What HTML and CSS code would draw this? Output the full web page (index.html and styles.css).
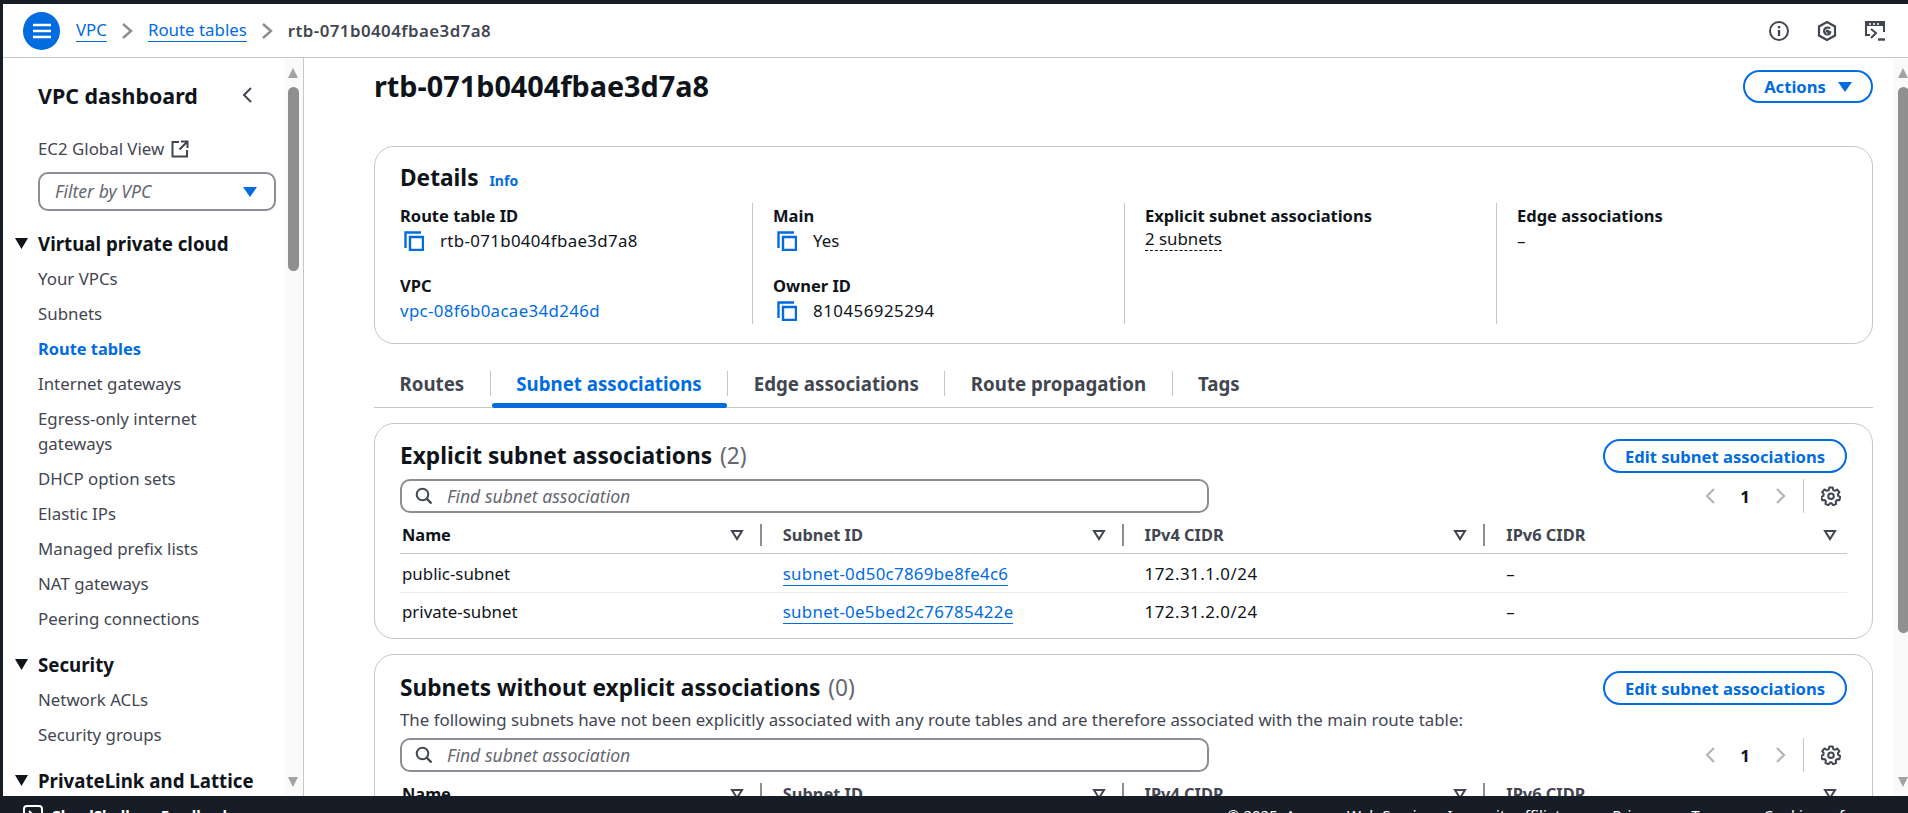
FILE: index.html
```html
<!DOCTYPE html>
<html lang="en">
<head>
    <meta charset="UTF-8">
    <title>rtb-071b0404fbae3d7a8 | VPC Console</title>
    <link rel="stylesheet" href="styles.css">
</head>
<body>
<div class="app">
    <header class="topbar">
        <button class="menu-btn">
            <svg width="20" height="16" viewBox="0 0 20 16"><path d="M1 2h18M1 8h18M1 14h18" stroke="#fff" stroke-width="2.4"/></svg>
        </button>
        <nav class="crumbs">
            <a href="#">VPC</a>
            <svg class="crumb-sep" width="12" height="18" viewBox="0 0 12 18"><path d="M2 2l8 7-8 7" fill="none" stroke="#8c8c94" stroke-width="2.4"/></svg>
            <a href="#">Route tables</a>
            <svg class="crumb-sep" width="12" height="18" viewBox="0 0 12 18"><path d="M2 2l8 7-8 7" fill="none" stroke="#8c8c94" stroke-width="2.4"/></svg>
            <span class="crumb-now">rtb-071b0404fbae3d7a8</span>
        </nav>
        <div class="top-icons">
            <svg width="22" height="22" viewBox="0 0 22 22"><circle cx="11" cy="11" r="9" fill="none" stroke="#424650" stroke-width="2"/><path d="M11 10v6" stroke="#424650" stroke-width="2.4"/><path d="M11 6v2.4" stroke="#424650" stroke-width="2.4"/></svg>
            <svg width="20" height="22" viewBox="0 0 20 22"><path d="M10 2l8 4.500v9L10 20l-8-4.500v-9z" fill="none" stroke="#424650" stroke-width="2.200"/><path d="M13 8.500A3.500 3.500 0 1 0 13 13.500" fill="none" stroke="#424650" stroke-width="2.200"/><path d="M9 10.500l5 2.500" stroke="#424650" stroke-width="3"/></svg>
            <svg width="22" height="22" viewBox="0 0 22 22"><path d="M6 15H2V2h18v10" fill="none" stroke="#424650" stroke-width="2"/><path d="M2 2h18v4H2z" fill="#424650"/><path d="M5 4h2M9 4h2M13 4h2" stroke="#fff" stroke-width="1.600"/><path d="M7 9l5 4-5 5" fill="none" stroke="#424650" stroke-width="2"/><path d="M14 19.500h7" stroke="#424650" stroke-width="2.400"/></svg>
        </div>
    </header>

    <div class="workspace">
        <aside class="sidebar">
            <div class="side-content">
                <div class="side-title">
                    <span>VPC dashboard</span>
                    <svg width="12" height="18" viewBox="0 0 12 18"><path d="M10 2L3 9l7 7" fill="none" stroke="#424650" stroke-width="2"/></svg>
                </div>
                <a class="global-link" href="#">EC2 Global View
                    <svg width="18" height="18" viewBox="0 0 18 18"><path d="M8 2H1.500v14.500H16V10" fill="none" stroke="#424650" stroke-width="2"/><path d="M10 1.500h6.500V8M16 2L8.500 9.500" fill="none" stroke="#424650" stroke-width="2"/></svg>
                </a>
                <div class="filter-box">
                    <span>Filter by VPC</span>
                    <svg width="14" height="10" viewBox="0 0 14 10"><path d="M0 0h14L7 10z" fill="#006ce0"/></svg>
                </div>
                <div class="nav-group">
                    <div class="nav-head"><svg width="13" height="11" viewBox="0 0 13 11"><path d="M0 0h13L6.500 11z" fill="#0f141a"/></svg>Virtual private cloud</div>
                    <a class="nav-item" href="#">Your VPCs</a>
                    <a class="nav-item" href="#">Subnets</a>
                    <a class="nav-item active" href="#">Route tables</a>
                    <a class="nav-item" href="#">Internet gateways</a>
                    <a class="nav-item" href="#">Egress-only internet gateways</a>
                    <a class="nav-item" href="#">DHCP option sets</a>
                    <a class="nav-item" href="#">Elastic IPs</a>
                    <a class="nav-item" href="#">Managed prefix lists</a>
                    <a class="nav-item" href="#">NAT gateways</a>
                    <a class="nav-item" href="#">Peering connections</a>
                </div>
                <div class="nav-group">
                    <div class="nav-head"><svg width="13" height="11" viewBox="0 0 13 11"><path d="M0 0h13L6.500 11z" fill="#0f141a"/></svg>Security</div>
                    <a class="nav-item" href="#">Network ACLs</a>
                    <a class="nav-item" href="#">Security groups</a>
                </div>
                <div class="nav-group">
                    <div class="nav-head"><svg width="13" height="11" viewBox="0 0 13 11"><path d="M0 0h13L6.500 11z" fill="#0f141a"/></svg>PrivateLink and Lattice</div>
                </div>
            </div>
            <div class="scroll scroll-side">
                <i class="scroll-up"></i>
                <i class="scroll-thumb"></i>
                <i class="scroll-down"></i>
            </div>
        </aside>

        <main class="main">
            <div class="main-content">
                <div class="page-head">
                    <h1>rtb-071b0404fbae3d7a8</h1>
                    <button class="btn btn-actions">Actions
                        <svg width="14" height="10" viewBox="0 0 14 10"><path d="M0 0h14L7 10z" fill="#006ce0"/></svg>
                    </button>
                </div>

                <section class="card card-details">
                    <h2>Details <a class="info" href="#">Info</a></h2>
                    <div class="details-grid">
                        <div class="detail-col">
                            <div class="detail">
                                <div class="label">Route table ID</div>
                                <div class="value copyable id-text"><svg class="copy" width="20" height="20" viewBox="0 0 20 20"><path d="M1.500 17V1.500H17" fill="none" stroke="#006ce0" stroke-width="2.400"/><path d="M6 6h13v13H6z" fill="none" stroke="#006ce0" stroke-width="2.400"/></svg>rtb-071b0404fbae3d7a8</div>
                            </div>
                            <div class="detail">
                                <div class="label">VPC</div>
                                <div class="value id-text"><a href="#" class="plain-link">vpc-08f6b0acae34d246d</a></div>
                            </div>
                        </div>
                        <div class="detail-col">
                            <div class="detail">
                                <div class="label">Main</div>
                                <div class="value copyable"><svg class="copy" width="20" height="20" viewBox="0 0 20 20"><path d="M1.500 17V1.500H17" fill="none" stroke="#006ce0" stroke-width="2.400"/><path d="M6 6h13v13H6z" fill="none" stroke="#006ce0" stroke-width="2.400"/></svg>Yes</div>
                            </div>
                            <div class="detail">
                                <div class="label">Owner ID</div>
                                <div class="value copyable num-text"><svg class="copy" width="20" height="20" viewBox="0 0 20 20"><path d="M1.500 17V1.500H17" fill="none" stroke="#006ce0" stroke-width="2.400"/><path d="M6 6h13v13H6z" fill="none" stroke="#006ce0" stroke-width="2.400"/></svg>810456925294</div>
                            </div>
                        </div>
                        <div class="detail-col">
                            <div class="detail">
                                <div class="label">Explicit subnet associations</div>
                                <div class="value"><span class="dashed">2 subnets</span></div>
                            </div>
                        </div>
                        <div class="detail-col">
                            <div class="detail">
                                <div class="label">Edge associations</div>
                                <div class="value">–</div>
                            </div>
                        </div>
                    </div>
                </section>

                <div class="tabs">
                    <a class="tab" href="#"><span>Routes</span></a>
                    <a class="tab active" href="#"><span>Subnet associations</span></a>
                    <a class="tab" href="#"><span>Edge associations</span></a>
                    <a class="tab" href="#"><span>Route propagation</span></a>
                    <a class="tab" href="#"><span>Tags</span></a>
                </div>

                <section class="card card-table">
                    <div class="card-head">
                        <div class="card-heading">
                            <h2>Explicit subnet associations <span class="count">(2)</span></h2>
                        </div>
                        <button class="btn">Edit subnet associations</button>
                    </div>
                    <div class="tools">
                        <div class="search">
                            <svg width="18" height="18" viewBox="0 0 18 18"><circle cx="7.500" cy="7.500" r="5.800" fill="none" stroke="#424650" stroke-width="2"/><path d="M11.500 11.500l5 5" stroke="#424650" stroke-width="2.400"/></svg>
                            <span>Find subnet association</span>
                        </div>
                        <div class="pager">
                            <svg width="12" height="18" viewBox="0 0 12 18"><path d="M10 2L3 9l7 7" fill="none" stroke="#b4b4bb" stroke-width="2.200"/></svg>
                            <b>1</b>
                            <svg width="12" height="18" viewBox="0 0 12 18"><path d="M2 2l7 7-7 7" fill="none" stroke="#b4b4bb" stroke-width="2.200"/></svg>
                            <i class="pager-sep"></i>
                            <svg class="gear" width="20" height="20" viewBox="0 0 20 20"><path d="M8.300 1.500h3.400l.5 2.500 1.700.8 2.200-1.300 2.300 2.700-1.500 2 .3 1.700 2 1-.8 3.300-2.500-.1-1.200 1.400.5 2.400-3 1.400-1.500-2h-1.800l-1.500 2-3-1.400.5-2.400-1.200-1.400-2.500.1-.8-3.300 2-1 .3-1.700-1.500-2 2.300-2.700L6.100 4.800 7.800 4z" fill="none" stroke="#424650" stroke-width="2" stroke-linejoin="round"/><circle cx="10" cy="10.300" r="2.800" fill="none" stroke="#424650" stroke-width="2"/></svg>
                        </div>
                    </div>
                    <div class="tbl-row tbl-head">
                        <div class="th first"><span>Name</span><svg class="caret" width="14" height="12" viewBox="0 0 14 12"><path d="M2 2h10L7 10z" fill="none" stroke="#424650" stroke-width="2"/></svg><i class="th-sep"></i></div>
                        <div class="th"><span>Subnet ID</span><svg class="caret" width="14" height="12" viewBox="0 0 14 12"><path d="M2 2h10L7 10z" fill="none" stroke="#424650" stroke-width="2"/></svg><i class="th-sep"></i></div>
                        <div class="th"><span>IPv4 CIDR</span><svg class="caret" width="14" height="12" viewBox="0 0 14 12"><path d="M2 2h10L7 10z" fill="none" stroke="#424650" stroke-width="2"/></svg><i class="th-sep"></i></div>
                        <div class="th last"><span>IPv6 CIDR</span><svg class="caret" width="14" height="12" viewBox="0 0 14 12"><path d="M2 2h10L7 10z" fill="none" stroke="#424650" stroke-width="2"/></svg></div>
                    </div>
                    <div class="tbl-row tbl-body">
                        <div class="td first">public-subnet</div>
                        <div class="td"><a href="#">subnet-0d50c7869be8fe4c6</a></div>
                        <div class="td num-text">172.31.1.0/24</div>
                        <div class="td">–</div>
                    </div>
                    <div class="tbl-row tbl-body no-line">
                        <div class="td first">private-subnet</div>
                        <div class="td"><a href="#">subnet-0e5bed2c76785422e</a></div>
                        <div class="td num-text">172.31.2.0/24</div>
                        <div class="td">–</div>
                    </div>
                </section>

                <section class="card card-table card-second">
                    <div class="card-head">
                        <div class="card-heading">
                            <h2>Subnets without explicit associations <span class="count">(0)</span></h2>
                            <p class="card-desc">The following subnets have not been explicitly associated with any route tables and are therefore associated with the main route table:</p>
                        </div>
                        <button class="btn">Edit subnet associations</button>
                    </div>
                    <div class="tools">
                        <div class="search">
                            <svg width="18" height="18" viewBox="0 0 18 18"><circle cx="7.500" cy="7.500" r="5.800" fill="none" stroke="#424650" stroke-width="2"/><path d="M11.500 11.500l5 5" stroke="#424650" stroke-width="2.400"/></svg>
                            <span>Find subnet association</span>
                        </div>
                        <div class="pager">
                            <svg width="12" height="18" viewBox="0 0 12 18"><path d="M10 2L3 9l7 7" fill="none" stroke="#b4b4bb" stroke-width="2.200"/></svg>
                            <b>1</b>
                            <svg width="12" height="18" viewBox="0 0 12 18"><path d="M2 2l7 7-7 7" fill="none" stroke="#b4b4bb" stroke-width="2.200"/></svg>
                            <i class="pager-sep"></i>
                            <svg class="gear" width="20" height="20" viewBox="0 0 20 20"><path d="M8.300 1.500h3.400l.5 2.500 1.700.8 2.200-1.300 2.300 2.700-1.500 2 .3 1.700 2 1-.8 3.300-2.500-.1-1.200 1.400.5 2.400-3 1.400-1.500-2h-1.800l-1.500 2-3-1.400.5-2.400-1.200-1.400-2.500.1-.8-3.300 2-1 .3-1.700-1.500-2 2.300-2.700L6.100 4.800 7.800 4z" fill="none" stroke="#424650" stroke-width="2" stroke-linejoin="round"/><circle cx="10" cy="10.300" r="2.800" fill="none" stroke="#424650" stroke-width="2"/></svg>
                        </div>
                    </div>
                    <div class="tbl-row tbl-head">
                        <div class="th first"><span>Name</span><svg class="caret" width="14" height="12" viewBox="0 0 14 12"><path d="M2 2h10L7 10z" fill="none" stroke="#424650" stroke-width="2"/></svg><i class="th-sep"></i></div>
                        <div class="th"><span>Subnet ID</span><svg class="caret" width="14" height="12" viewBox="0 0 14 12"><path d="M2 2h10L7 10z" fill="none" stroke="#424650" stroke-width="2"/></svg><i class="th-sep"></i></div>
                        <div class="th"><span>IPv4 CIDR</span><svg class="caret" width="14" height="12" viewBox="0 0 14 12"><path d="M2 2h10L7 10z" fill="none" stroke="#424650" stroke-width="2"/></svg><i class="th-sep"></i></div>
                        <div class="th last"><span>IPv6 CIDR</span><svg class="caret" width="14" height="12" viewBox="0 0 14 12"><path d="M2 2h10L7 10z" fill="none" stroke="#424650" stroke-width="2"/></svg></div>
                    </div>
                </section>
            </div>
            <div class="scroll scroll-main">
                <i class="scroll-up"></i>
                <i class="scroll-thumb"></i>
                <i class="scroll-down"></i>
            </div>
        </main>
    </div>

    <footer class="footer">
        <div class="foot-left">
            <svg width="20" height="20" viewBox="0 0 20 20"><rect x="1" y="1" width="18" height="18" rx="3" fill="none" stroke="#fff" stroke-width="2"/><path d="M6 6l4 4-4 4" fill="none" stroke="#fff" stroke-width="2"/></svg>
            <span>CloudShell</span>
            <span>Feedback</span>
        </div>
        <div class="foot-right">
            <span class="copyright">© 2025, Amazon Web Services, Inc. or its affiliates.</span>
            <span>Privacy</span>
            <span>Terms</span>
            <span>Cookie preferences</span>
        </div>
    </footer>
</div>
</body>
</html>
```

FILE: styles.css
```css
html, body {
    margin: 0;
    height: 100%;
    overflow: hidden;
    background: #161d26;
    font-family: "Noto Sans", sans-serif;
    font-size: 16.85px;
    line-height: 25px;
    color: #0f141a;
}
a {
    color: #006ce0;
    text-decoration: none;
}
h1, h2, p {
    margin: 0;
}
.app {
    height: 813px;
    padding: 4px 0 0 3px;
    box-sizing: border-box;
    display: flex;
    flex-direction: column;
}
.id-text {
    letter-spacing: .35px;
}
.num-text {
    letter-spacing: .5px;
}

/* top bar */
.topbar {
    height: 53px;
    flex: none;
    background: #fff;
    border-bottom: 1px solid #c6c6cd;
    display: flex;
    align-items: center;
    padding: 0 22px 0 20px;
}
.menu-btn {
    width: 37px;
    height: 38px;
    border: none;
    border-radius: 50%;
    background: #006ce0;
    padding: 0;
    display: flex;
    align-items: center;
    justify-content: center;
}
.crumbs {
    margin-left: 16px;
    display: flex;
    align-items: center;
    flex: 1;
}
.crumbs a {
    border-bottom: 1px solid #006ce0;
    line-height: 22px;
}
.crumb-sep {
    margin: 0 14.500px;
}
.crumb-now {
    font-weight: 600;
    color: #424650;
    letter-spacing: .45px;
}
.top-icons {
    display: flex;
    align-items: center;
    gap: 27px;
}

/* layout under the top bar */
.workspace {
    flex: 1;
    min-height: 0;
    display: flex;
    background: #fff;
}
.sidebar {
    width: 300px;
    flex: none;
    display: flex;
    border-right: 1px solid #c6c6cd;
    overflow: hidden;
}
.side-content {
    flex: 1;
    min-width: 0;
    padding-left: 35px;
}
.side-title {
    height: 40px;
    margin-top: 17px;
    display: flex;
    align-items: center;
    justify-content: space-between;
    padding-right: 31px;
    font-size: 21.4px;
    font-weight: 700;
}
.global-link {
    display: flex;
    align-items: center;
    gap: 7px;
    margin-top: 21px;
    color: #424650;
}
.filter-box {
    width: 238px;
    height: 39px;
    box-sizing: border-box;
    margin-top: 11px;
    padding: 0 17px 0 15px;
    border: 2px solid #8c8c94;
    border-radius: 10px;
    display: flex;
    align-items: center;
    justify-content: space-between;
    font-style: italic;
    font-size: 17.6px;
    color: #656871;
}
.nav-group {
    margin-bottom: 10px;
}
.filter-box + .nav-group {
    margin-top: 14px;
}
.nav-head {
    height: 36px;
    margin-left: -23px;
    display: flex;
    align-items: center;
    gap: 10px;
    font-size: 18.7px;
    font-weight: 700;
    white-space: nowrap;
}
.nav-item {
    display: block;
    max-width: 200px;
    padding: 5px 0;
    color: #424650;
}
.nav-item.active {
    color: #006ce0;
    font-weight: 700;
    font-size: 16.4px;
}

/* fake scrollbars */
.scroll {
    flex: none;
    display: flex;
    flex-direction: column;
    background: #fafafa;
    box-sizing: border-box;
}
.scroll-side {
    width: 19px;
    padding-left: 4px;
}
.scroll-main {
    width: 15px;
    padding-left: 5px;
}
.scroll-up {
    flex: none;
    width: 0;
    margin-top: 10px;
    border: 5.500px solid transparent;
    border-top: none;
    border-bottom: 10px solid #a3a3a3;
}
.scroll-thumb {
    flex: none;
    width: 11px;
    margin-top: 9px;
    border-radius: 6px;
    background: #8f8f8f;
}
.scroll-side .scroll-thumb {
    height: 184px;
}
.scroll-main .scroll-thumb {
    height: 546px;
}
.scroll-down {
    flex: none;
    width: 0;
    margin-top: auto;
    margin-bottom: 9px;
    border: 5.500px solid transparent;
    border-bottom: none;
    border-top: 10px solid #a3a3a3;
}

/* main column */
.main {
    flex: 1;
    min-width: 0;
    display: flex;
}
.main-content {
    flex: 1;
    min-width: 0;
    height: 738px;
    overflow: hidden;
    padding: 0 20px 0 70px;
}
.page-head {
    display: flex;
    justify-content: space-between;
    align-items: flex-start;
    padding-top: 8px;
}
h1 {
    font-size: 28.8px;
    line-height: 40px;
    font-weight: 700;
}
.btn {
    width: 244px;
    height: 34px;
    padding: 0;
    background: #fff;
    border: 2px solid #006ce0;
    border-radius: 20px;
    color: #006ce0;
    font-family: inherit;
    font-size: 16.6px;
    font-weight: 700;
    white-space: nowrap;
    flex: none;
}
.btn-actions {
    width: 130px;
    height: 33px;
    margin-top: 4px;
    display: flex;
    align-items: center;
    justify-content: center;
    gap: 12px;
}
.card {
    border: 1px solid #c6c6cd;
    border-radius: 20px;
    background: #fff;
    padding: 0 25px;
}
.card h2 {
    font-size: 22.7px;
    line-height: 30px;
    font-weight: 700;
}
.card-details {
    margin-top: 40px;
    height: 198px;
    box-sizing: border-box;
    padding-top: 16px;
}
.info {
    font-size: 14px;
    line-height: 1;
    font-weight: 700;
    margin-left: 5px;
}
.details-grid {
    display: grid;
    grid-template-columns: 352px 372px 372px 1fr;
    margin-top: 10px;
}
.detail-col {
    height: 121px;
    display: flex;
    flex-direction: column;
    gap: 20px;
    padding-left: 20px;
    border-left: 1px solid #c6c6cd;
}
.detail-col:first-child {
    padding-left: 0;
    border-left: none;
}
.label {
    font-size: 16.5px;
    font-weight: 700;
}
.value {
    display: flex;
    align-items: center;
}
.copy {
    margin: 0 16px 0 4px;
    flex: none;
}
.dashed {
    border-bottom: 1px dashed #0f141a;
    line-height: 22px;
}

/* tabs */
.tabs {
    display: flex;
    border-bottom: 1px solid #c6c6cd;
    padding-top: 27px;
}
.tab {
    position: relative;
    padding-bottom: 11px;
    color: #424650;
    font-size: 18.7px;
    font-weight: 700;
}
.tab span {
    display: block;
    padding: 0 25.500px;
    border-right: 1px solid #c6c6cd;
}
.tab:last-child span {
    border-right: none;
}
.tab.active {
    color: #006ce0;
}
.tab.active::after {
    content: "";
    position: absolute;
    left: 1px;
    right: 1px;
    bottom: -1px;
    height: 5px;
    border-radius: 3px;
    background: #006ce0;
}

/* table cards */
.card-table {
    margin-top: 15px;
    padding-top: 15px;
    padding-bottom: 6px;
}
.card-second {
    padding-top: 16px;
}
.card-head {
    display: flex;
    justify-content: space-between;
    align-items: flex-start;
}
.card-heading {
    flex: 1;
    min-width: 0;
    padding-top: 2px;
}
.count {
    font-weight: 400;
    color: #656871;
    margin-left: 2px;
}
.card-desc {
    color: #424650;
    margin-top: 4px;
    white-space: nowrap;
}
.tools {
    display: flex;
    align-items: center;
    justify-content: space-between;
    margin-top: 6px;
}
.search {
    width: 809px;
    height: 34px;
    box-sizing: border-box;
    border: 2px solid #8c8c94;
    border-radius: 10px;
    display: flex;
    align-items: center;
    gap: 14px;
    padding-left: 13px;
    font-style: italic;
    font-size: 17.6px;
    color: #656871;
}
.pager {
    display: flex;
    align-items: center;
    height: 34px;
}
.pager b {
    width: 22px;
    margin: 0 19px 0 18px;
    text-align: center;
}
.pager-sep {
    width: 1px;
    height: 34px;
    margin: 0 17px 0 16px;
    background: #c6c6cd;
}
.gear {
    margin-right: 6px;
}
.tbl-row {
    display: grid;
    grid-template-columns: repeat(4, 1fr);
    border-bottom: 1px solid #ebebf0;
}
.tbl-head {
    height: 41px;
    box-sizing: border-box;
    border-bottom: 1px solid #c6c6cd;
    padding-top: 3px;
}
.tbl-body {
    height: 39px;
    box-sizing: border-box;
    padding-top: 1px;
    align-items: center;
}
.no-line {
    border-bottom: none;
    padding-top: 0;
    padding-bottom: 3px;
}
.th {
    display: flex;
    align-items: center;
    padding-left: 21px;
    font-size: 16.4px;
    font-weight: 700;
    color: #424650;
}
.th span {
    flex: 1;
}
.th.first {
    padding-left: 2px;
    color: #0f141a;
}
.th.last {
    padding-right: 10px;
}
.th-sep {
    width: 2px;
    height: 22px;
    margin-left: 16px;
    background: #8c8c94;
}
.td {
    padding-left: 21px;
}
.td.first {
    padding-left: 2px;
}
.td a {
    border-bottom: 1px solid #006ce0;
    letter-spacing: .3px;
}

/* bottom bar */
.footer {
    flex: none;
    height: 17px;
    margin-left: -3px;
    overflow: hidden;
    background: #161d26;
    color: #fff;
    display: flex;
    justify-content: space-between;
    font-size: 15px;
    padding-top: 9px;
    box-sizing: border-box;
    line-height: 20px;
}
.foot-left {
    display: flex;
    align-items: flex-start;
    gap: 8px;
    padding-left: 23px;
    font-weight: 700;
}
.foot-left span + span {
    margin-left: 23px;
}
.foot-right {
    display: flex;
    gap: 29px;
    padding-right: 9px;
}
.copyright {
    margin-right: 3px;
}
```
